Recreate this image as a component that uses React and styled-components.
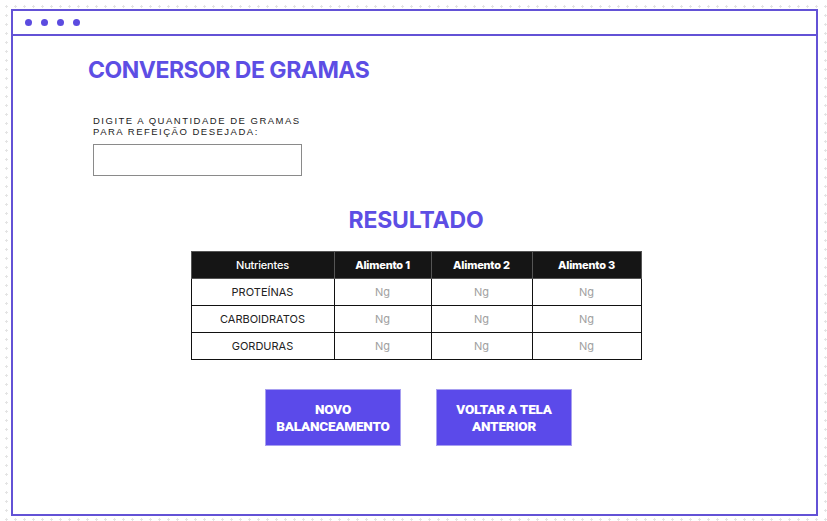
import styled, { createGlobalStyle } from 'styled-components';

const GlobalStyle = createGlobalStyle`
  html, body {
    margin: 0;
    padding: 0;
    background-color: #fff;
    background-image: radial-gradient(#e4e4e4 1px, transparent 1.2px);
    background-size: 9px 9px;
    background-position: 2px 2px;
    font-family: Inter, 'Liberation Sans', sans-serif;
  }
`;

const rows = ['PROTEÍNAS', 'CARBOIDRATOS', 'GORDURAS'];
const foods = ['Alimento 1', 'Alimento 2', 'Alimento 3'];

const App = () => {
  return (
    <>
      <GlobalStyle />
      <Page>
        <Window>
          <TitleBar>
            <Dot />
            <Dot />
            <Dot />
            <Dot />
          </TitleBar>
          <Content>
            <Title>CONVERSOR DE GRAMAS</Title>
            <FormGroup>
              <Label htmlFor='grams'>
                DIGITE A QUANTIDADE DE GRAMAS
                <br />
                PARA REFEIÇÃO DESEJADA:
              </Label>
              <Input id='grams' type='text' />
            </FormGroup>
            <Result>
              <ResultTitle>RESULTADO</ResultTitle>
              <Table>
                <colgroup>
                  <col style={{ width: 143 }} />
                  <col style={{ width: 97 }} />
                  <col style={{ width: 101 }} />
                  <col style={{ width: 109 }} />
                </colgroup>
                <thead>
                  <tr>
                    <Th $light>Nutrientes</Th>
                    {foods.map((f) => (
                      <Th key={f}>{f}</Th>
                    ))}
                  </tr>
                </thead>
                <tbody>
                  {rows.map((r) => (
                    <tr key={r}>
                      <Td>{r}</Td>
                      {foods.map((f) => (
                        <Td key={f} $muted>
                          Ng
                        </Td>
                      ))}
                    </tr>
                  ))}
                </tbody>
              </Table>
              <Actions>
                <Button>
                  NOVO
                  <br />
                  BALANCEAMENTO
                </Button>
                <Button>
                  VOLTAR A TELA
                  <br />
                  ANTERIOR
                </Button>
              </Actions>
            </Result>
          </Content>
        </Window>
      </Page>
    </>
  );
};

const Page = styled.div`
  padding: 9px 9px 5px 11px;
  height: 521px;
  box-sizing: border-box;
`;

const Window = styled.div`
  height: 100%;
  box-sizing: border-box;
  border: 2px solid #6352d6;
  background: #fff;
  display: flex;
  flex-direction: column;
`;

const TitleBar = styled.div`
  height: 23px;
  border-bottom: 2px solid #6352d6;
  display: flex;
  align-items: center;
  gap: 9px;
  padding-left: 12px;
`;

const Dot = styled.span`
  width: 7px;
  height: 7px;
  border-radius: 50%;
  background: #5b4be0;
`;

const Content = styled.div`
  flex: 1;
  padding: 20px 0 0 75px;
`;

const Title = styled.h1`
  margin: 0;
  font-size: 23px;
  line-height: 28px;
  font-weight: 700;
  color: #5d4ee4;
  letter-spacing: -0.5px;
`;

const FormGroup = styled.div`
  margin-top: 31px;
  margin-left: 5px;
`;

const Label = styled.label`
  display: block;
  font-family: 'Liberation Sans', Arial, sans-serif;
  font-size: 9.5px;
  line-height: 11px;
  letter-spacing: 1.5px;
  color: #222;
`;

const Input = styled.input`
  display: block;
  margin-top: 7px;
  width: 209px;
  height: 32px;
  box-sizing: border-box;
  border: 1px solid #8a8a8a;
  background: transparent;
`;

const Result = styled.div`
  display: flex;
  flex-direction: column;
  align-items: center;
  margin-left: -72px;
  margin-top: 30px;
`;

const ResultTitle = styled.h2`
  margin: 0;
  font-size: 23px;
  font-weight: 700;
  color: #5d4ee4;
  letter-spacing: -0.2px;
`;

const Table = styled.table`
  margin-top: 17px;
  border-collapse: collapse;
  font-size: 11px;
  table-layout: fixed;
  width: 450px;
`;

const Th = styled.th`
  background: #151515;
  color: #fff;
  height: 27px;
  padding: 0;
  box-sizing: border-box;
  border: 1px solid #555;
  font-weight: ${({ $light }) => ($light ? 500 : 800)};
  letter-spacing: -0.2px;
`;

const Td = styled.td`
  height: 27px;
  padding: 0;
  box-sizing: border-box;
  border: 1px solid #111;
  text-align: center;
  color: ${({ $muted }) => ($muted ? '#a0a0a0' : '#222')};
`;

const Actions = styled.div`
  display: flex;
  gap: 35px;
  margin-top: 29px;
  margin-left: 5px;
`;

const Button = styled.button`
  width: 136px;
  height: 57px;
  box-sizing: border-box;
  background: #5b4aea;
  border: 1px solid #a79ff0;
  color: #fff;
  font-family: Roboto, 'Liberation Sans', sans-serif;
  font-weight: 900;
  font-size: 13.5px;
  line-height: 17px;
  letter-spacing: -0.2px;
  cursor: pointer;
`;

export default App;
